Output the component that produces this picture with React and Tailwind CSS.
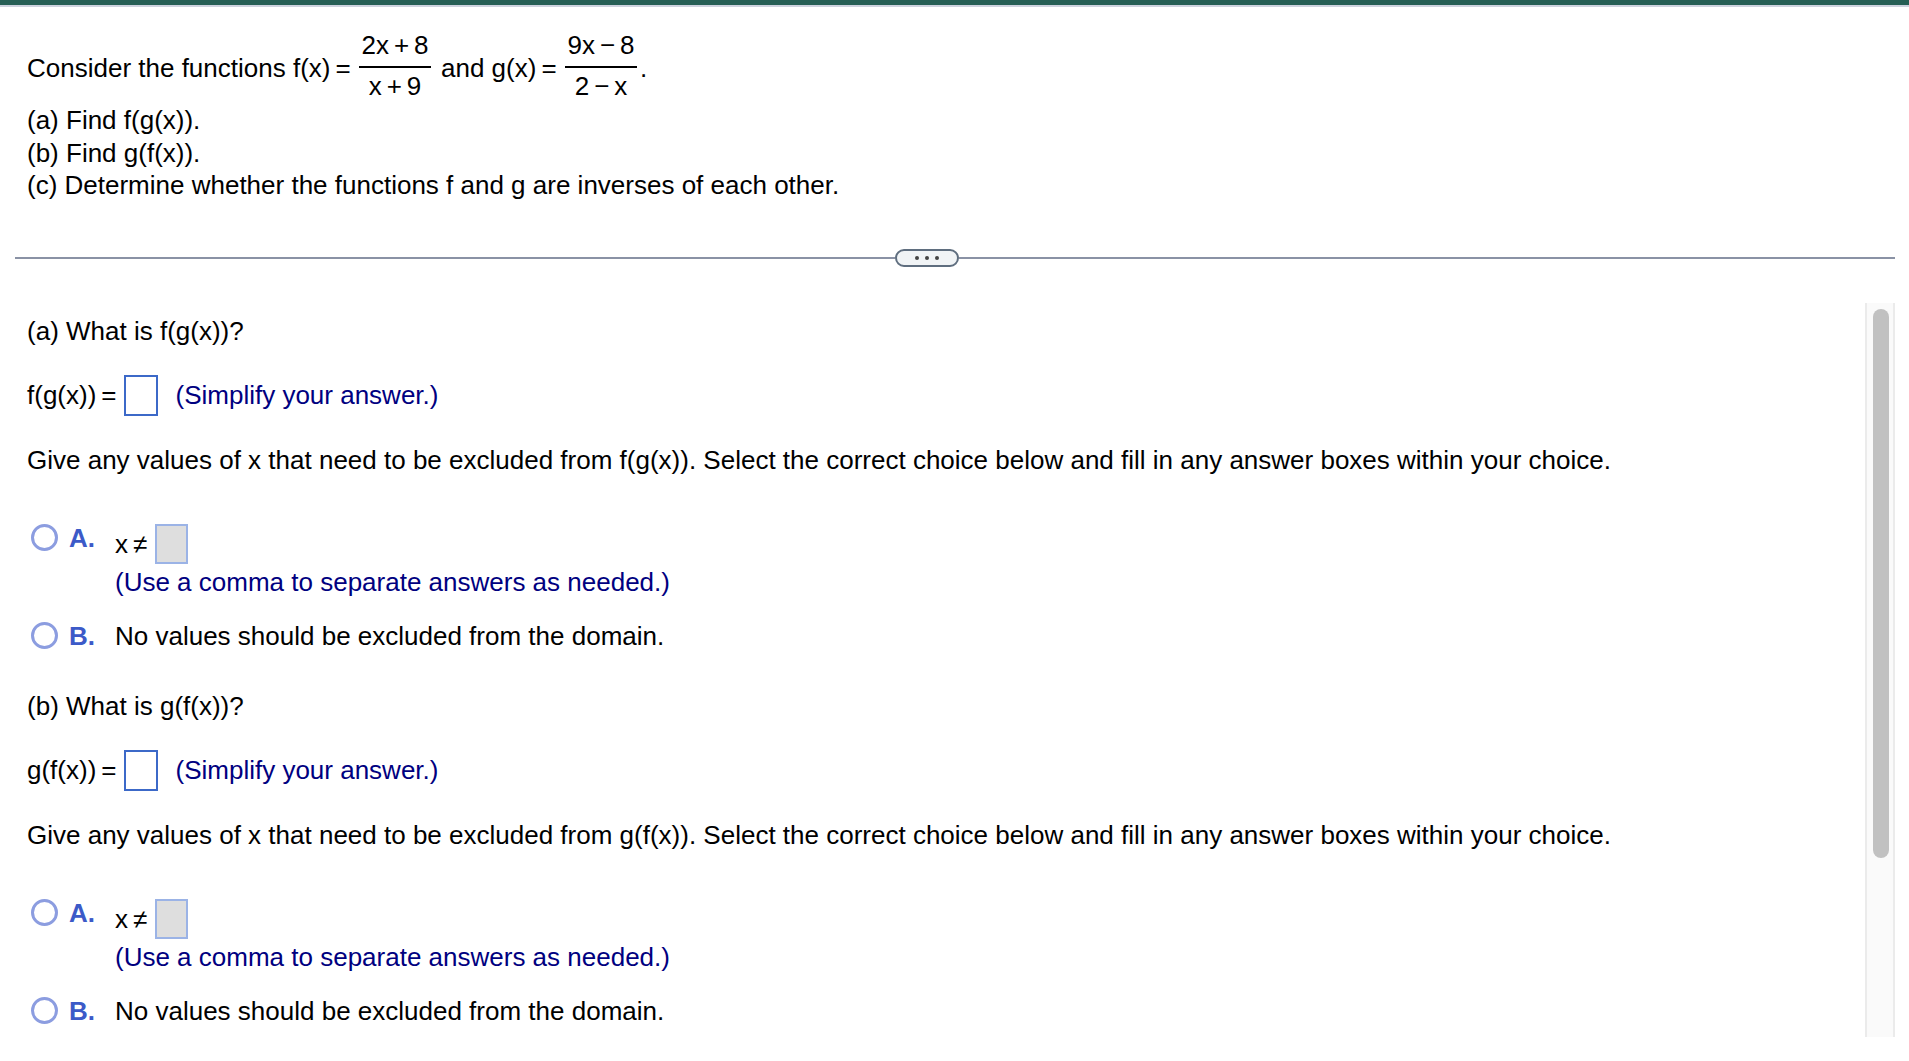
import { useState } from 'react'

// ── Math helpers ────────────────────────────────────────────────────────────
const Fraction = ({ top, bottom }) => (
  <span className="flex w-[72px] flex-col items-center whitespace-nowrap">
    <span className="h-[37px] leading-8">{top}</span>
    <span className="h-0.5 w-full bg-black" />
    <span className="pt-0.5 leading-8">{bottom}</span>
  </span>
)

const Op = ({ children }) => <span className="mx-[5px]">{children}</span>

const AnswerBox = ({ label, disabled = false }) => (
  <input
    type="text"
    aria-label={label}
    disabled={disabled}
    className={
      disabled
        ? 'h-10 w-[33px] border-2 border-[#9bb3e6] bg-[#dedede]'
        : 'h-[41px] w-[34px] border-2 border-[#3c69c8] bg-white px-1 outline-none'
    }
  />
)

const Radio = ({ name, value, checked, onChange }) => (
  <input
    type="radio"
    name={name}
    aria-label={value}
    checked={checked}
    onChange={() => onChange(value)}
    className="h-[27px] w-[27px] appearance-none rounded-full border-[3px] border-[#8c9de0] bg-white checked:border-8"
  />
)

// ── One lettered part: answer box plus the excluded-values choice ───────────
const Part = ({ letter, fn }) => {
  const [choice, setChoice] = useState(null)

  return (
    <section className="h-[375px] pl-[27px]">
      <p className="h-[60px]">({letter}) What is {fn}?</p>

      <div className="flex h-[41px] items-start">
        <span className="w-[97px] pt-1 whitespace-nowrap">{fn}<Op>=</Op></span>
        <AnswerBox label={fn} />
        <span className="ml-[17.5px] pt-1 text-[#000080]">(Simplify your answer.)</span>
      </div>

      <p className="mt-[28px] whitespace-nowrap">
        Give any values of x that need to be excluded from {fn}. Select the correct choice below and fill in any answer boxes within your choice.
      </p>

      <div className="mt-[48px] flex h-[98px] items-start pl-[3.5px]">
        <Radio name={letter} value="A" checked={choice === 'A'} onChange={setChoice} />
        <span className="ml-[11.5px] w-[46px] -mt-0.5 font-bold text-[#3c5ac8]">A.</span>
        <div>
          <div className="flex h-[42px] items-start">
            <span className="w-10 pt-1 whitespace-nowrap">x<Op>≠</Op></span>
            <AnswerBox label="excluded values" disabled />
          </div>
          <p className="text-[#000080]">(Use a comma to separate answers as needed.)</p>
        </div>
      </div>

      <div className="flex items-start pl-[3.5px]">
        <Radio name={letter} value="B" checked={choice === 'B'} onChange={setChoice} />
        <span className="ml-[11.5px] w-[46px] -mt-0.5 font-bold text-[#3c5ac8]">B.</span>
        <span className="-mt-0.5">No values should be excluded from the domain.</span>
      </div>
    </section>
  )
}

// ── Divider with the drag handle ────────────────────────────────────────────
const Divider = () => (
  <div className="mx-[15px] flex h-[18px] w-[1880px] items-center">
    <span className="h-0.5 w-[880px] bg-[#8a92a5]" />
    <button className="flex h-[18px] w-16 items-center justify-center gap-1.5 rounded-full border-2 border-[#5f6e7f] bg-[#f1f4f6]">
      <span className="h-1 w-1 rounded-full bg-[#444]" />
      <span className="h-1 w-1 rounded-full bg-[#444]" />
      <span className="h-1 w-1 rounded-full bg-[#444]" />
    </button>
    <span className="h-0.5 flex-1 bg-[#8a92a5]" />
  </div>
)

const App = () => (
  <div className="h-[1061px] w-[1909px] overflow-hidden bg-white font-['Liberation_Sans',Arial,sans-serif] text-[26px] leading-8 text-black">
    <div className="h-[7px] border-b-2 border-[#cdd2de] bg-[#265f55]" />

    <header className="h-[242px] pl-[27px] pt-[22px]">
      <div className="flex h-[75px] items-start">
        <span className="w-[332px] pt-[23px] whitespace-nowrap">Consider the functions f(x)<Op>=</Op></span>
        <Fraction top={<>2x<Op>+</Op>8</>} bottom={<>x<Op>+</Op>9</>} />
        <span className="ml-[10px] w-[124px] pt-[23px] whitespace-nowrap">and g(x)<Op>=</Op></span>
        <Fraction top={<>9x<Op>−</Op>8</>} bottom={<>2<Op>−</Op>x</>} />
        <span className="ml-[3px] pt-[23px]">.</span>
      </div>
      <p className="h-[33px]">(a) Find f(g(x)).</p>
      <p>(b) Find g(f(x)).</p>
      <p>(c) Determine whether the functions f and g are inverses of each other.</p>
    </header>

    <Divider />

    <main className="mt-9 flex h-[734px]">
      <div className="w-[1865px] overflow-hidden pt-3">
        <Part letter="a" fn="f(g(x))" />
        <Part letter="b" fn="g(f(x))" />
      </div>
      <div className="w-[30px] border-x-2 border-[#ebebeb] bg-[#fafafa] pl-1.5 pt-1.5">
        <div className="h-[549px] w-4 rounded-full bg-[#c1c1c1]" />
      </div>
    </main>
  </div>
)

export default App
